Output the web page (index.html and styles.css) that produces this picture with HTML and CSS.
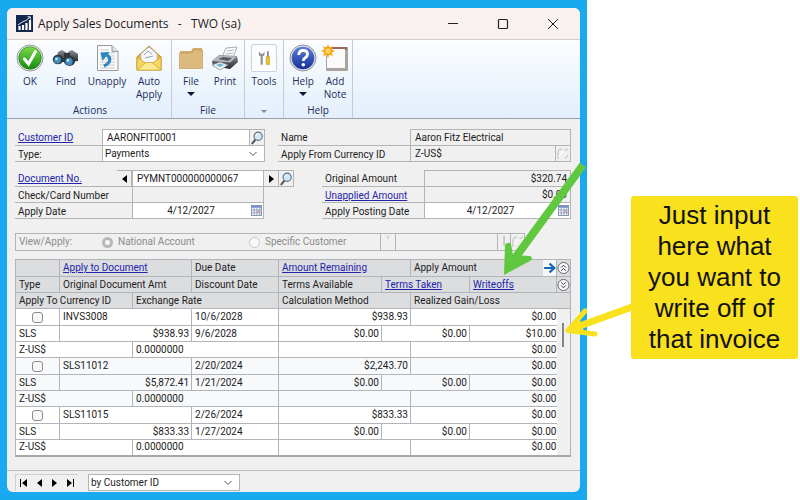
FILE: index.html
```html
<!DOCTYPE html>
<html lang="en">
<head>
<meta charset="utf-8">
<title>Apply Sales Documents - TWO (sa)</title>
<link rel="stylesheet" href="styles.css">
</head>
<body>
<svg width="0" height="0" class="defs" aria-hidden="true">
  <defs>
    <linearGradient id="gGreen" x1="0" y1="0" x2="0" y2="1"><stop offset="0" stop-color="#7ddb4a"/><stop offset="1" stop-color="#118a12"/></linearGradient>
    <linearGradient id="gBlue" x1="0" y1="0" x2="0" y2="1"><stop offset="0" stop-color="#5a7fd8"/><stop offset="1" stop-color="#16309a"/></linearGradient>
    <linearGradient id="gDark" x1="0" y1="0" x2="0" y2="1"><stop offset="0" stop-color="#8a8f96"/><stop offset="1" stop-color="#24282e"/></linearGradient>
    <symbol id="lens" viewBox="0 0 14 15">
      <path d="M5.5 9 L2 13.2" stroke="#555" stroke-width="2.2" stroke-linecap="round"/>
      <circle cx="8.2" cy="5.6" r="4.4" fill="#cfe6f6" stroke="#5d7084" stroke-width="1.2"/>
      <path d="M5.8 5.2a2.6 2.6 0 0 1 2.6-2.2" stroke="#fff" stroke-width="1.2" fill="none"/>
    </symbol>
    <symbol id="cal" viewBox="0 0 12 12">
      <rect x=".5" y=".5" width="11" height="11" fill="#fff" stroke="#7d8fb0"/>
      <rect x="1" y="1" width="10" height="2" fill="#6f8fc8"/>
      <path d="M1 5.5h10M1 8.5h10M3.5 3v8M6.5 3v8M9.5 3v8" stroke="#8899b8" fill="none"/>
      <rect x="7" y="6" width="2" height="2" fill="#d88"/>
    </symbol>
    <symbol id="chev" viewBox="0 0 10 10"><path d="M1.5 3 L5 6.5 L8.5 3" fill="none" stroke="#555"/></symbol>
    <symbol id="faint" viewBox="0 0 14 14"><path d="M2 12V5q0-3 4-3M8 4l4-2M9 12l3-4" fill="none" stroke="#bbb"/><path d="M3 10q1-5 6-6" stroke="#fff" fill="none"/></symbol>
  </defs>
</svg>

<div class="frame">
  <main class="window">
    <header class="title">
      <svg class="app-icon" viewBox="0 0 17 17"><rect width="17" height="17" fill="#14284f"/><path d="M3.5 15v-4M7 15v-5M10.500 15v-7M14 15V5" stroke="#fff" stroke-width="2.200"/><path d="M2 10 L7 6.500 L10 5.500 L14 1.800M11.500 1.800H14.300V4.500" stroke="#dfe6f2" fill="none"/></svg>
      <h1>Apply Sales Documents &nbsp;&nbsp;- &nbsp;&nbsp;TWO (sa)</h1>
      <button class="cap" aria-label="Minimize"><svg viewBox="0 0 12 12"><path d="M1 5.500h10" stroke="#222"/></svg></button>
      <button class="cap" aria-label="Maximize"><svg viewBox="0 0 12 12"><rect x="1.500" y="1.500" width="9" height="9" rx="1" fill="none" stroke="#222" stroke-width="1.200"/></svg></button>
      <button class="cap" aria-label="Close"><svg viewBox="0 0 12 12"><path d="M1 1 L11 11M11 1 L1 11" stroke="#222"/></svg></button>
    </header>

    <nav class="ribbon">
      <section class="group actions">
        <div class="tools">
          <button class="w36"><svg viewBox="0 0 28 28"><circle cx="14" cy="14" r="13" fill="#eee" stroke="#999"/><circle cx="14" cy="14" r="11.300" fill="url(#gGreen)" stroke="#167a18" stroke-width=".6"/><path d="M8.500 15 L12.500 20 L19.500 7.500" fill="none" stroke="#fff" stroke-width="3" stroke-linecap="round"/></svg>OK</button>
          <button class="w36"><svg viewBox="0 0 28 28"><path d="M6 8 L10 6 L15 9 L14 18 L4 18Z" fill="url(#gDark)"/><path d="M16 8 L20 6 L26 10 L26 17 L16 18Z" fill="url(#gDark)"/><path d="M12 9h6v6h-6z" fill="#31363d"/><ellipse cx="6" cy="15.500" rx="5.200" ry="4.800" fill="#31363d"/><ellipse cx="17.500" cy="17" rx="5.600" ry="5" fill="#31363d"/><circle cx="5.500" cy="16" r="3.400" fill="#3f8fc4"/><circle cx="17" cy="17.500" r="3.700" fill="#3f8fc4"/><circle cx="4.500" cy="15" r="1.300" fill="#bfe6fa"/><circle cx="16" cy="16.500" r="1.400" fill="#bfe6fa"/></svg>Find</button>
          <button class="w46"><svg viewBox="0 0 28 28"><path d="M4.500 1.500H19L25 7.500V26.500H4.500Z" fill="#fafafa" stroke="#999"/><path d="M19 1.500V7.500H25" fill="#ddd" stroke="#999"/><path d="M7 6h9M7 9h15M7 12h15M7 15h15M7 18h15M7 21h15M7 24h15" stroke="#c6c9ce"/><path d="M11 22 Q18 19 16.500 13.500 L13.500 10.500" fill="none" stroke="#2c86c4" stroke-width="3.200"/><path d="M7.500 8.500 L16.500 8 L9.500 17Z" fill="#2c86c4"/></svg>Unapply</button>
          <button class="w38"><svg viewBox="0 0 28 28"><path d="M2 13 L14 2 L26 13 V26H2Z" fill="#e5b63c" stroke="#b78a22"/><path d="M6 10 L14 3 L22 10 V17 L14 21 L6 17Z" fill="#f5f7fb" stroke="#b8bfca" stroke-width=".7"/><path d="M9 11l4-4 4 3M10 14l8-2" stroke="#8fa4c0" fill="none"/><path d="M2 13 L11 19.500 H17 L26 13 V26H2Z" fill="#f6d861" stroke="#cf9f2c" stroke-width=".8"/><path d="M2.500 25.500 L11 18.500 H17 L25.500 25.500" fill="#fae98e" stroke="#cf9f2c" stroke-width=".8"/></svg>Auto<br>Apply</button>
        </div>
        <h2>Actions</h2>
      </section>
      <section class="group file">
        <div class="tools">
          <button class="w34"><svg viewBox="0 0 28 28"><path d="M3 7H14L16 4H25V24H3Z" fill="#d3ad6c"/><path d="M3 9H15L17 6H25.500V24.500H2.500V9Z" fill="#dcb97d" stroke="#c49c5c" stroke-width=".7"/></svg>File<i class="down"></i></button>
          <button class="w34"><svg viewBox="0 0 28 28"><path d="M11 13 L15 4 L26 3 L22 14Z" fill="#f8f9fb" stroke="#999" stroke-width=".8"/><path d="M16 7l7-1M15 10l7-1" stroke="#bbb"/><path d="M1 17 L8 11 L26 12 L27 18 L19 25 L2 22Z" fill="url(#gDark)"/><path d="M1 17 L8 11.500 L26 12.500 L19 18.500Z" fill="#b4b8be"/><path d="M7 15l5-2 9 1-4 3z" fill="#555b63"/><path d="M1 21 L9 18 L17 21 L9 26Z" fill="#eef2f6" stroke="#888" stroke-width=".7"/><path d="M5 21l4-1.500 4 1.500-4 2z" fill="#69b5d4"/></svg>Print</button>
        </div>
        <h2>File</h2>
      </section>
      <section class="group single">
        <div class="tools">
          <button class="w38"><svg class="boxed" viewBox="0 0 28 28"><path d="M8 6v4q0 2 2 2v10h2.500V12q2 0 2-2V6l-1.500 3h-3z" fill="#8b929b"/><path d="M18.500 6v8" stroke="#7d858f" stroke-width="2"/><rect x="16.500" y="12" width="4" height="10" rx="1.500" fill="#e8c32d" stroke="#b08f13" stroke-width=".6"/></svg>Tools</button>
        </div>
        <h2><i class="down small"></i></h2>
      </section>
      <section class="group help">
        <div class="tools">
          <button class="w34"><svg viewBox="0 0 28 28"><circle cx="14" cy="14" r="13" fill="#dfe2e8" stroke="#8d929c"/><circle cx="14" cy="14" r="11.300" fill="url(#gBlue)"/><path d="M9.800 11 Q10 6.500 14.200 6.500 Q18.500 6.500 18.500 10.300 Q18.500 12.500 16 14 Q14.300 15 14.300 17" fill="none" stroke="#fff" stroke-width="2.800"/><circle cx="14.300" cy="20.800" r="1.800" fill="#fff"/></svg>Help<i class="down"></i></button>
          <button class="w30"><svg viewBox="0 0 28 28"><rect x="5" y="3" width="22" height="24" rx="1" fill="#a9a39f"/><rect x="5" y="3" width="21" height="3" fill="#9a6a55"/><rect x="6" y="5" width="18" height="19" fill="#fafafa"/><path d="M7 0 L8.500 3.500 L12 2 L10.800 5.500 L14 7 L10.800 8.500 L12 12 L8.500 10.800 L7 14 L5.500 10.800 L2 12 L3.300 8.500 L0 7 L3.300 5.500 L2 2 L5.500 3.500Z" fill="#f7a81e"/><circle cx="7" cy="7" r="2.500" fill="#ffd65a"/></svg>Add<br>Note</button>
        </div>
        <h2>Help</h2>
      </section>
    </nav>

    <form class="body">
      <div class="pair first">
        <div class="block">
          <div class="row"><label class="l87" for="cust"><a href="#cust">Customer ID</a></label><input id="cust" class="edit" value="AARONFIT0001"><button type="button" class="side" aria-label="Look up customer"><svg><use href="#lens"/></svg></button></div>
          <div class="row"><label class="l87" for="type">Type:</label><span class="pick"><select id="type"><option>Payments</option></select><svg><use href="#chev"/></svg></span></div>
        </div>
        <div class="block">
          <div class="row"><label class="l132" for="name">Name</label><input id="name" readonly value="Aaron Fitz Electrical"></div>
          <div class="row"><label class="l132" for="cur">Apply From Currency ID</label><input id="cur" readonly value="Z-US$"><button type="button" class="side" aria-label="Currency details" disabled><svg><use href="#faint"/></svg></button></div>
        </div>
      </div>

      <div class="pair second">
        <div class="block">
          <div class="row"><label class="l102" for="doc"><a href="#doc">Document No.</a></label><button type="button" class="side" aria-label="Previous document"><i class="tri left"></i></button><input id="doc" class="edit" value="PYMNT000000000067"><button type="button" class="side" aria-label="Next document"><i class="tri right"></i></button><button type="button" class="side" aria-label="Look up document"><svg><use href="#lens"/></svg></button></div>
          <div class="row short"><label class="l117" for="check">Check/Card Number</label><input id="check" readonly value=""></div>
          <div class="row short"><label class="l117" for="adate">Apply Date</label><input id="adate" class="edit date" value="4/12/2027"><button type="button" class="side plain" aria-label="Choose apply date"><svg><use href="#cal"/></svg></button></div>
        </div>
        <div class="block">
          <div class="row"><label class="l102" for="orig">Original Amount</label><input id="orig" class="num" readonly value="$320.74"></div>
          <div class="row"><label class="l102" for="unapp"><a href="#unapp">Unapplied Amount</a></label><input id="unapp" class="num" readonly value="$0.03"></div>
          <div class="row"><label class="l102" for="pdate">Apply Posting Date</label><input id="pdate" class="edit date" value="4/12/2027"><button type="button" class="side plain" aria-label="Choose posting date"><svg><use href="#cal"/></svg></button></div>
        </div>
      </div>

      <fieldset class="view" disabled>
        <span class="caption">View/Apply:</span>
        <label class="opt"><input type="radio" name="view" checked>National Account</label>
        <label class="opt specific"><input type="radio" name="view">Specific Customer</label>
        <span class="cell">&#x2032;</span>
        <input class="who" aria-label="Customer">
        <span class="cell">|</span>
        <button type="button" class="side" aria-label="Look up customer"><svg><use href="#faint"/></svg></button>
      </fieldset>

      <table class="docs">
        <colgroup><col class="c44"><col class="c73"><col class="c59"><col class="c87"><col class="rest"><col class="c29"><col class="c59"><col class="c73"><col class="c14"><col class="c14"></colgroup>
        <thead>
          <tr><th></th><th colspan="2"><a href="#docs">Apply to Document</a></th><th>Due Date</th><th colspan="2"><a href="#docs">Amount Remaining</a></th><th colspan="2" class="open">Apply Amount</th><th class="ico go"><button type="button" aria-label="Go to"><svg viewBox="0 0 12 12"><path d="M1 6H10M6 2 L10.500 6 L6 10" fill="none" stroke="#1668b8" stroke-width="2"/></svg></button></th><th class="ico"><button type="button" aria-label="Hide details"><svg viewBox="0 0 14 14"><circle cx="7" cy="7" r="6" fill="#f4f5f7" stroke="#5c6068"/><path d="M4.500 6.500 L7 4 L9.500 6.500M4.500 10 L7 7.500 L9.500 10" fill="none" stroke="#333"/></svg></button></th></tr>
          <tr><th>Type</th><th colspan="2">Original Document Amt</th><th>Discount Date</th><th>Terms Available</th><th colspan="2"><a href="#docs">Terms Taken</a></th><th colspan="2"><a href="#docs">Writeoffs</a></th><th class="ico"><button type="button" aria-label="Show details"><svg viewBox="0 0 14 14"><circle cx="7" cy="7" r="6" fill="#f4f5f7" stroke="#5c6068"/><path d="M4.500 4 L7 6.500 L9.500 4M4.500 7.500 L7 10 L9.500 7.500" fill="none" stroke="#333"/></svg></button></th></tr>
          <tr><th colspan="2">Apply To Currency ID</th><th colspan="2">Exchange Rate</th><th colspan="2">Calculation Method</th><th colspan="4">Realized Gain/Loss</th></tr>
        </thead>
        <tbody>
          <tr><td class="mid"><input type="checkbox" aria-label="Apply INVS3008"></td><td colspan="2">INVS3008</td><td>10/6/2028</td><td colspan="2" class="num">$938.93</td><td colspan="3" class="num end">$0.00</td><td rowspan="9" class="scroll"><div class="thumb"></div></td></tr>
          <tr><td>SLS</td><td colspan="2" class="num">$938.93</td><td>9/6/2028</td><td class="num">$0.00</td><td colspan="2" class="num">$0.00</td><td colspan="2" class="num end"><input class="amount" aria-label="Writeoff for INVS3008" value="$10.00"></td></tr>
          <tr><td colspan="2">Z-US$</td><td colspan="2">0.0000000</td><td colspan="2"></td><td colspan="3" class="num end">$0.00</td></tr>
          <tr class="alt"><td class="mid"><input type="checkbox" aria-label="Apply SLS11012"></td><td colspan="2">SLS11012</td><td>2/20/2024</td><td colspan="2" class="num">$2,243.70</td><td colspan="3" class="num end">$0.00</td></tr>
          <tr class="alt"><td>SLS</td><td colspan="2" class="num">$5,872.41</td><td>1/21/2024</td><td class="num">$0.00</td><td colspan="2" class="num">$0.00</td><td colspan="2" class="num end">$0.00</td></tr>
          <tr class="alt"><td colspan="2">Z-US$</td><td colspan="2">0.0000000</td><td colspan="2"></td><td colspan="3" class="num end">$0.00</td></tr>
          <tr><td class="mid"><input type="checkbox" aria-label="Apply SLS11015"></td><td colspan="2">SLS11015</td><td>2/26/2024</td><td colspan="2" class="num">$833.33</td><td colspan="3" class="num end">$0.00</td></tr>
          <tr><td>SLS</td><td colspan="2" class="num">$833.33</td><td>1/27/2024</td><td class="num">$0.00</td><td colspan="2" class="num">$0.00</td><td colspan="2" class="num end">$0.00</td></tr>
          <tr><td colspan="2">Z-US$</td><td colspan="2">0.0000000</td><td colspan="2"></td><td colspan="3" class="num end">$0.00</td></tr>
        </tbody>
      </table>
    </form>

    <footer class="status">
      <div class="records">
        <button aria-label="First record"><i class="bar"></i><i class="tri left"></i></button>
        <button aria-label="Previous record"><i class="tri left"></i></button>
        <button aria-label="Next record"><i class="tri right"></i></button>
        <button aria-label="Last record"><i class="tri right"></i><i class="bar"></i></button>
      </div>
      <span class="pick sort"><select aria-label="Sort order"><option>by Customer ID</option></select><svg><use href="#chev"/></svg></span>
    </footer>
  </main>
</div>

<aside class="notes"><p>Just input here what you want to write off of that invoice</p></aside>

<svg class="arrows" viewBox="0 0 800 500" aria-hidden="true">
  <path d="M583 165 L510 265" fill="none" stroke="#5fc83f" stroke-width="8"/>
  <path d="M504 275 L505 245 Q508 241 511 244 L513 255 L530 256 Q534 258 530 261Z" fill="#5fc83f"/>
  <path d="M632 307 L574 328" stroke="#f9e11d" stroke-width="7"/>
  <path d="M568 330.500 L585 311M568 330.500 L595 334" stroke="#f9e11d" stroke-width="5" stroke-linecap="round"/>
  <path d="M565 331 L580 320 L584 331Z" fill="#f9e11d"/>
</svg>
</body>
</html>
```
FILE: styles.css
```css
* { box-sizing: border-box; }

body {
  margin: 0;
  min-height: 100vh;
  display: flex;
  position: relative;
  background: #fff;
  color: #1c1c1c;
  font: 10px/14px Roboto, "Liberation Sans", sans-serif;
}

button, input, select {
  font: inherit;
  color: inherit;
  margin: 0;
  padding: 0;
  border: 0;
  border-radius: 0;
  background: none;
  min-width: 0;
}

a { color: #2323ae; }
.defs { position: absolute; }

.frame {
  flex: 1;
  min-width: 0;
  display: flex;
  padding: 8px 7px;
  background: #18a9ef;
}

.window {
  flex: 1;
  min-width: 0;
  display: flex;
  flex-direction: column;
  background: #f0f0f0;
  border-radius: 6px;
  overflow: hidden;
}

/* title bar */
.title {
  display: flex;
  align-items: center;
  height: 32px;
  padding: 0 2px 0 9px;
  background: #f9f1f0;
  border-bottom: 1px solid #cfcfd2;
}
.app-icon { width: 17px; height: 17px; margin-right: 5px; }
.title h1 {
  flex: 1;
  margin: 0;
  font: 12px/16px "Open Sans", "Noto Sans", sans-serif;
  white-space: nowrap;
}
.cap { width: 50px; height: 31px; display: grid; place-items: center; }
.cap svg { width: 12px; height: 12px; }

/* ribbon */
.ribbon {
  display: flex;
  height: 79px;
  background: linear-gradient(#fbfdff, #e3effb);
  border-bottom: 1px solid #96a0aa;
  color: #232c5c;
  font: 10px/13px "Open Sans", "Noto Sans", sans-serif;
}
.group {
  display: flex;
  flex-direction: column;
  justify-content: space-between;
  padding: 4px 2px 1px;
  border-right: 1px solid #c3ccd6;
}
.group.actions { padding-left: 5px; padding-right: 3px; }
.group.single { padding-left: 0; padding-right: 0; }
.tools { display: flex; align-items: flex-start; }
.tools button {
  display: flex;
  flex-direction: column;
  align-items: center;
  white-space: nowrap;
}
.tools svg { width: 28px; height: 28px; margin-bottom: 3px; }
.tools svg.boxed { width: 26px; border: 1px solid #ccd3dc; border-radius: 2px; background: #fdfdfe; }
.w30 { width: 30px; }
.w34 { width: 34px; }
.w36 { width: 36px; }
.w38 { width: 38px; }
.w46 { width: 46px; }
.group h2 { margin: 0; font: inherit; text-align: center; min-height: 13px; }
.down {
  display: inline-block;
  margin-top: 4px;
  border: 4px solid transparent;
  border-top-color: #101840;
  border-bottom: 0;
}
.down.small { border-width: 3px 3px 0; border-top-color: #7c8aa5; vertical-align: middle; margin: 0; }

/* entry fields */
.body { flex: 1; padding: 10px 9px 0 8px; }
.pair { display: grid; margin-bottom: 8px; }
.first { grid-template-columns: 250fr 293fr; column-gap: 13px; }
.second { grid-template-columns: 279fr 249fr; column-gap: 28px; margin-bottom: 14px; }
.block { min-width: 0; }
.row { display: flex; height: 16px; border-bottom: 1px solid #b4b4b4; }
.row.short { margin-right: 30px; }
.row label { flex: none; padding: 2px 0 0 3px; line-height: 14px; white-space: nowrap; }
.row input { flex: 1; width: 0; padding: 0 4px; border-left: 1px solid #b4b4b4; border-right: 1px solid #b4b4b4; }
.row:first-child { height: 17px; }
.row:first-child > :not(label) { border-top: 1px solid #b4b4b4; }
.row .edit { background: #fff; }
.l87 { width: 87px; }
.l102 { width: 102px; }
.l117 { width: 117px; }
.l132 { width: 132px; }
.num { text-align: right; }
.row .num { padding-right: 3px; }
.row .date { text-align: center; border-right: 0; }
.side {
  flex: none;
  width: 15px;
  display: grid;
  place-items: center;
  border-right: 1px solid #b4b4b4;
}
.side svg { width: 14px; height: 14px; }
.side.plain { background: #fff; }
.side.plain svg { width: 11px; height: 11px; }

.pick {
  flex: 1;
  display: grid;
  grid-template-columns: 1fr 16px;
  align-items: center;
  background: #fff;
  border: solid #b4b4b4;
  border-width: 0 1px;
}
.pick select { grid-area: 1 / 1 / 2 / 3; height: 15px; padding-left: 2px; appearance: none; outline: 0; }
.pick svg { grid-area: 1 / 2; width: 10px; height: 10px; pointer-events: none; }

.tri { border: 4px solid transparent; }
.tri.left { border-right: 5px solid #000; border-left: 0; }
.tri.right { border-left: 5px solid #000; border-right: 0; }

.view {
  display: flex;
  align-items: center;
  min-width: 0;
  height: 18px;
  margin: 0 46px 8px 0;
  padding: 0;
  border: 1px solid #b4b4b4;
  border-right: 0;
  color: #8c8c8c;
}
.caption { width: 86px; padding-left: 3px; }
.opt { display: flex; align-items: center; gap: 5px; width: 147px; white-space: nowrap; }
.opt input {
  appearance: none;
  width: 11px;
  height: 11px;
  border: 1px solid #c6c6c6;
  border-radius: 50%;
  background: #f8f8f8;
}
.opt input:checked { border: 3px solid #b8b8b8; }
.opt.specific { flex: 1; }
.cell { width: 15px; height: 16px; border-left: 1px solid #b4b4b4; text-align: center; }
.who { width: 102px; height: 16px; border-left: 1px solid #b4b4b4; }
.who + .cell { width: 13px; }
.view .side { border-left: 1px solid #b4b4b4; height: 16px; }

/* documents */
.docs {
  width: 100%;
  table-layout: fixed;
  border-collapse: collapse;
  border: 1px solid #a6a8ab;
  border-bottom-width: 2px;
  line-height: 14px;
}
.c14 { width: 14px; }
.c29 { width: 29px; }
.c44 { width: 44px; }
.c59 { width: 59px; }
.c73 { width: 73px; }
.c87 { width: 87px; }
.docs tr { height: 16px; background: #fff; }
.docs tr:nth-child(3n+1) { height: 17px; }
.docs .alt { background: #f8f9fb; }
.docs th, .docs td {
  padding: 0 2px 0 3px;
  border: 1px solid #b1b4b8;
  font-weight: normal;
  text-align: left;
  white-space: nowrap;
}
.docs thead tr { background: #dcdddf; }
.docs .num { text-align: right; }
.docs .end { padding-right: 0; border-right: 0; }
.docs .open { border-right: 0; }
.docs .ico { padding: 0; }
.docs .go { background: #f6f8fb; border-left: 0; }
.ico button { display: grid; place-items: center; width: 100%; }
.ico svg { width: 13px; height: 14px; }
.docs .mid { text-align: center; padding: 0; }
.mid input {
  display: block;
  appearance: none;
  width: 11px;
  height: 11px;
  margin: 0 auto;
  border: 1px solid #8b8b8b;
  border-radius: 3px;
  background: #f7f7f7;
}
.amount { display: block; width: 100%; height: 14px; text-align: right; }
.docs .scroll { background: #f0f0f0; padding: 14px 0 0; vertical-align: top; border-left: 0; }
.thumb { width: 2px; height: 24px; margin: 0 auto; background: #858585; }

/* status bar */
.status {
  display: flex;
  gap: 10px;
  padding: 3px 8px 1px;
  border-top: 1px solid #bcbcbc;
}
.records { display: flex; width: 63px; height: 17px; border: 1px solid #cfcfcf; border-width: 1px 0 0 1px; }
.records button { flex: 1; display: flex; align-items: center; justify-content: center; gap: 1px; }
.bar { width: 1px; height: 8px; background: #000; }
.sort { flex: 0 0 152px; height: 17px; border-width: 1px; }

/* callout */
.notes { flex: 0 0 213px; padding: 196px 2px 0 44px; }
.notes p {
  margin: 0;
  padding: 4px 10px;
  border-radius: 3px;
  background: #f9e11d;
  color: #111;
  font: 26px/31px "Liberation Sans", Arial, sans-serif;
  text-align: center;
}
.arrows { position: absolute; top: 0; left: 0; width: 100%; pointer-events: none; }
```
